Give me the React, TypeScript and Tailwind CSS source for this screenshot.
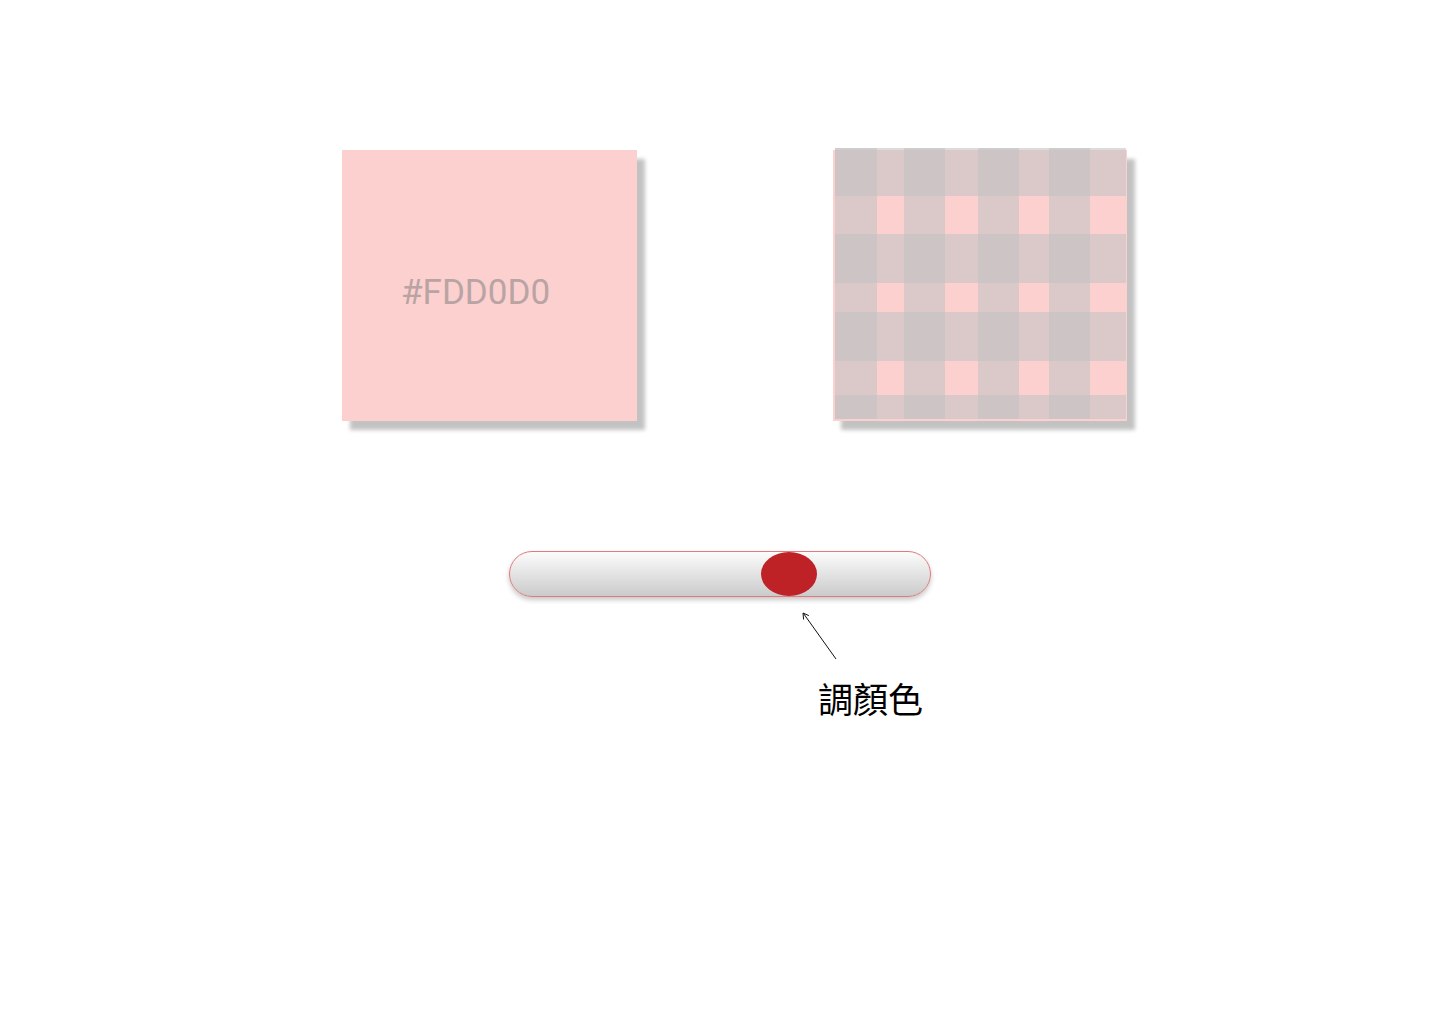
const COLS = [42, 27, 41, 33, 41, 30, 41, 36]
const ROWS = [48, 38, 49, 29, 49, 34, 24]

function cellTone(r: number, c: number) {
  const rowBand = r % 2 === 0
  const colBand = c % 2 === 0
  if (rowBand && colBand) return 'bg-[rgba(194,194,194,0.82)]'
  if (rowBand || colBand) return 'bg-[rgba(194,194,194,0.58)]'
  return 'bg-transparent'
}

function Swatch() {
  return (
    <div className="relative h-[271px] w-[295px] bg-[#fdd0d0] shadow-[8px_9px_4px_rgba(0,0,0,0.24)]">
      <div className="pl-[59px] pt-[125px] font-['Roboto',sans-serif] text-[35px] leading-none text-[#b9a4a4]">
        #FDD0D0
      </div>
    </div>
  )
}

function Gingham() {
  return (
    <div className="relative h-[271px] w-[294px] bg-[#fdd0d0] shadow-[8px_9px_4px_rgba(0,0,0,0.24)]">
      <div
        className="absolute left-[2px] top-[-2px] grid"
        style={{
          gridTemplateColumns: COLS.map((w) => `${w}px`).join(' '),
          gridTemplateRows: ROWS.map((h) => `${h}px`).join(' '),
        }}
      >
        {ROWS.map((_, r) =>
          COLS.map((__, c) => <div key={`${r}-${c}`} className={cellTone(r, c)} />),
        )}
      </div>
    </div>
  )
}

function Slider() {
  return (
    <div className="relative ml-[509px] h-[46px] w-[422px] rounded-full border border-[#e07a7d] bg-gradient-to-b from-[#fcfcfc] to-[#cbcbcb] shadow-[0_3px_5px_rgba(0,0,0,0.22)]">
      <div className="absolute left-[251px] top-0 h-[44px] w-[56px] rounded-[50%] bg-[#be2226]" />
    </div>
  )
}

export default function App() {
  return (
    <div className="flex h-[1024px] w-[1440px] flex-col bg-white pt-[150px]">
      <div className="ml-[342px] flex gap-[196px]">
        <Swatch />
        <Gingham />
      </div>

      <div className="mt-[130px]">
        <Slider />
      </div>

      <svg className="ml-[798px] mt-[13px]" width="45" height="52" viewBox="0 0 45 52">
        <line x1="38" y1="49" x2="5.5" y2="3.5" stroke="#111" strokeWidth="1" />
        <path d="M5 3 L5.6 9.5 M5 3 L10.8 5.6" stroke="#111" strokeWidth="1" fill="none" />
      </svg>

      <div className="ml-[818px] mt-[18px] font-['Noto_Sans_CJK_TC','Noto_Sans_CJK_SC',sans-serif] text-[35px] leading-none text-black">
        調顏色
      </div>
    </div>
  )
}
